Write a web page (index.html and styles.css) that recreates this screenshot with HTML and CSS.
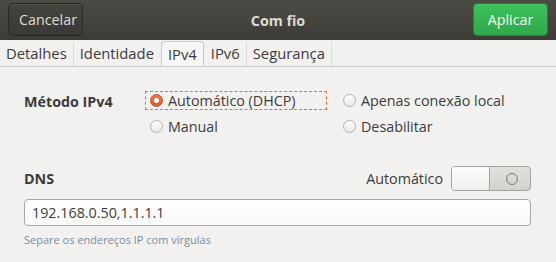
FILE: index.html
```html
<!DOCTYPE html>
<html>
<head>
<meta charset="utf-8">
<link rel="stylesheet" href="styles.css">
</head>
<body>
<div class="window">
  <header class="headerbar">
    <button class="hb-btn cancel">Cancelar</button>
    <div class="title">Com fio</div>
    <button class="hb-btn apply">Aplicar</button>
  </header>
  <nav class="tabs">
    <span class="tab">Detalhes</span>
    <span class="sep"></span>
    <span class="tab">Identidade</span>
    <span class="tab active">IPv4</span>
    <span class="tab">IPv6</span>
    <span class="sep"></span>
    <span class="tab">Segurança</span>
    <span class="sep"></span>
  </nav>
  <main class="content">
    <div class="method">
      <div class="label">Método IPv4</div>
      <div class="radios">
        <div class="radio focused"><span class="dot checked"></span>Automático (DHCP)</div>
        <div class="radio"><span class="dot"></span>Apenas conexão local</div>
        <div class="radio"><span class="dot"></span>Manual</div>
        <div class="radio"><span class="dot"></span>Desabilitar</div>
      </div>
    </div>
    <div class="dns-head">
      <div class="label">DNS</div>
      <div class="auto">Automático
        <span class="switch"><span class="knob"></span><span class="off"><span class="ring"></span></span></span>
      </div>
    </div>
    <div class="entry">192.168.0.50,1.1.1.1</div>
    <div class="hint">Separe os endereços IP com vírgulas</div>
  </main>
</div>
</body>
</html>
```
FILE: styles.css
```css
* { box-sizing: border-box; }
html, body { margin: 0; padding: 0; }
body {
  width: 556px; height: 262px; overflow: hidden;
  background: #f2f1f0;
  font-family: "Open Sans", "Noto Sans", sans-serif;
  font-size: 14.3px;
  color: #3c3c3c;
}
.headerbar {
  height: 40px;
  background: linear-gradient(#4d4b45, #3c3b37);
  display: flex; align-items: center; justify-content: space-between;
  padding: 0 8px;
  position: relative;
}
.hb-btn {
  font-family: inherit; font-size: 14.3px;
  height: 33px; border-radius: 4px; padding: 0 10px;
  margin-top: -1px;
}
.cancel {
  width: 75px;
  background: linear-gradient(#45433e, #3a3935);
  border: 1px solid #2a2926;
  color: #dfdbd2;
  box-shadow: inset 0 1px 0 rgba(255,255,255,0.06);
}
.apply {
  width: 75px;
  background: linear-gradient(#3ec15b, #2fa84b);
  border: 1px solid #24813a;
  color: #f4fbf5;
}
.title {
  position: absolute; left: 0; right: 0; top: 0; height: 40px;
  display: flex; align-items: center; justify-content: center;
  font-weight: bold; color: #dfdbd2; pointer-events: none;
}
.tabs {
  height: 27px;
  display: flex; align-items: stretch;
  border-bottom: 1px solid #cdc9c4;
  font-size: 14.8px;
}
.tab {
  padding: 3px 6px 0 6px;
  color: #3c3c3c;
}
.tab.active {
  background: #f7f6f5;
  border: 1px solid #cdc9c4;
  border-bottom: none;
  border-radius: 4px 4px 0 0;
  margin: 1px 1px 0 1px;
  padding: 2px 6px 0 6px;
}
.sep { width: 1px; background: #dcd9d5; margin-top: 2px; }
.content { padding: 24px 25px 0 24px; }
.method { display: flex; }
.label { font-weight: bold; color: #3c3c3c; width: 121px; padding-top: 1px; }
.radios {
  display: grid;
  grid-template-columns: 193px auto;
  row-gap: 7px;
}
.radio {
  display: flex; align-items: center;
  height: 19px;
  padding-left: 5px;
  color: #3c3c3c;
  white-space: nowrap;
}
.radio.focused { outline: 1px dashed #e86f3c; outline-offset: -1px; width: 182px; }
.dot {
  width: 13px; height: 13px; border-radius: 50%;
  border: 1px solid #b5b2ad;
  background: linear-gradient(#fdfdfd, #ebe9e7);
  margin-right: 5px; flex: none;
}
.dot.checked {
  border-color: #c1522b;
  background: radial-gradient(circle, #fff 0 2.2px, transparent 2.8px), linear-gradient(#f07a4b, #dd5a2a);
}
.dns-head {
  display: flex; justify-content: space-between; align-items: center;
  margin-top: 30px;
  height: 25px;
}
.dns-head .label { padding-top: 0; }
.auto { display: flex; align-items: center; gap: 8px; color: #3c3c3c; }
.switch {
  width: 80px; height: 25px; border: 1px solid #a5a29e; border-radius: 4px;
  display: flex; overflow: hidden;
  background: linear-gradient(#e2e0dd, #d4d2ce);
}
.knob {
  width: 38px; background: linear-gradient(#fcfcfc, #efeeec);
  border-right: 1px solid #a5a29e; border-radius: 0 3px 3px 0;
}
.off { flex: 1; display: flex; align-items: center; justify-content: center; }
.ring { width: 12px; height: 12px; border: 1px solid #7a7875; border-radius: 50%; margin-left: 4px; }
.entry {
  margin-top: 8px;
  height: 27px;
  border: 1px solid #a9a6a2; border-radius: 4px;
  background: linear-gradient(#fff, #f9f9f9);
  padding: 3px 7px 0;
  color: #3c3c3c;
}
.hint { font-size: 11px; color: #7a8d9c; margin-top: 6px; }
```
